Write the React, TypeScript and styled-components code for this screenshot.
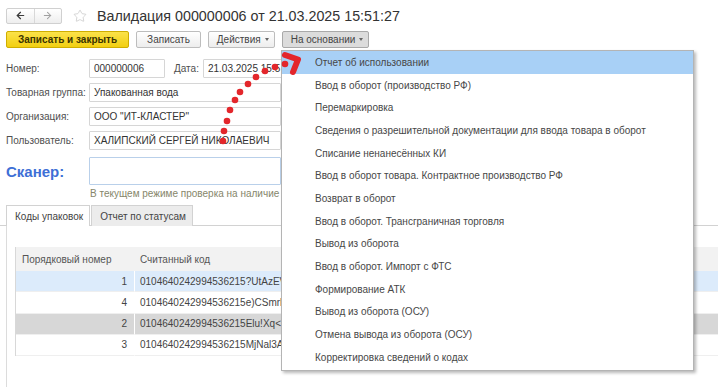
import React from 'react';
import styled, { createGlobalStyle, css } from 'styled-components';
import { ArrowLeft, ArrowRight, Star } from 'lucide-react';

const GlobalStyle = createGlobalStyle`
	html, body {
		margin: 0;
		padding: 0;
		background: #fff;
	}
	body {
		font-family: "Liberation Sans", Arial, sans-serif;
		font-size: 10px;
		color: #333;
	}
`;

const Page = styled.div`
	position: relative;
	width: 718px;
	height: 387px;
	overflow: hidden;
	background: #fff;
`;

const Header = styled.div`
	display: flex;
	align-items: center;
	height: 17px;
	padding: 7px 0 0 6px;
`;

const NavGroup = styled.div`
	display: flex;
	width: 56px;
	height: 16px;
	box-sizing: border-box;
	border: 1px solid #d0d0d0;
	border-radius: 2px;
	background: linear-gradient(#ffffff, #eeeeee);
`;

const NavButton = styled.div<{ $muted?: boolean }>`
	flex: 1;
	display: flex;
	align-items: center;
	justify-content: center;
	color: ${({ $muted }) => ($muted ? '#a0a0a0' : '#3a3a3a')};
	& + & {
		border-left: 1px solid #d8d8d8;
	}
`;

const StarBox = styled.div`
	display: flex;
	margin: 0 10px 0 11px;
	color: #c8c8c8;
`;

const Title = styled.div`
	font-size: 14.3px;
	color: #333;
	white-space: nowrap;
`;

const CommandBar = styled.div`
	display: flex;
	gap: 7px;
	padding: 7px 6px 0;
`;

const CmdButton = styled.div<{ $variant?: 'primary' | 'pressed'; $menu?: boolean }>`
	display: flex;
	align-items: center;
	gap: 4px;
	height: 17px;
	box-sizing: border-box;
	padding: ${({ $menu }) => ($menu ? '0 5px 0 8px' : '0 10px')};
	border: 1px solid #bdbdbd;
	border-radius: 2px;
	background: linear-gradient(#ffffff, #ededed);
	color: #444;
	white-space: nowrap;
	${({ $variant }) =>
		$variant === 'primary' &&
		css`
			padding: 0 11px;
			font-weight: bold;
			color: #3a3300;
			border-color: #cfae00;
			background: linear-gradient(#fbe24a, #f2cf12);
		`}
	${({ $variant }) =>
		$variant === 'pressed' &&
		css`
			border-color: #a9a9a9;
			background: #dcdcdc;
		`}
`;

const Caret = styled.span`
	width: 0;
	height: 0;
	border-left: 2px solid transparent;
	border-right: 2px solid transparent;
	border-top: 3px solid #666;
`;

const Form = styled.div`
	display: grid;
	grid-template-columns: 83px 1fr;
	grid-auto-rows: 19px;
	row-gap: 5px;
	align-items: center;
	padding: 11px 0 0 6px;
`;

const Label = styled.div`
	color: #4f4f4f;
	white-space: nowrap;
`;

const ScannerLabel = styled(Label)`
	font-size: 15px;
	font-weight: bold;
	color: #3e6fd6;
`;

const FieldRow = styled.div`
	display: flex;
	align-items: center;
	min-width: 0;
`;

const Input = styled.div<{ $width?: number; $tall?: boolean }>`
	display: flex;
	align-items: center;
	flex: none;
	width: ${({ $width }) => $width ?? 330}px;
	height: ${({ $tall }) => ($tall ? 28 : 19)}px;
	box-sizing: border-box;
	padding: 0 4px;
	border: 1px solid ${({ $tall }) => ($tall ? '#b9d0ea' : '#d6d6d6')};
	border-radius: 1px;
	background: #fff;
	color: #333;
	white-space: nowrap;
	overflow: hidden;
`;

const InlineLabel = styled(Label)`
	margin: 0 4px 0 9px;
`;

const ScannerRow = styled.div`
	display: grid;
	grid-template-columns: 83px 1fr;
	align-items: center;
	padding: 7px 0 0 6px;
`;

const Hint = styled.div`
	padding: 2px 0 0 90px;
	line-height: 13px;
	color: #86866a;
	white-space: nowrap;
`;

const TabBar = styled.div`
	display: flex;
	height: 21px;
	margin-top: 5px;
	padding-left: 6px;
	box-sizing: border-box;
	border-bottom: 1px solid #d2d2d2;
`;

const Tab = styled.div<{ $active?: boolean }>`
	display: flex;
	align-items: center;
	height: 21px;
	box-sizing: border-box;
	padding: 0 6px 0 8px;
	margin-right: 1px;
	border: 1px solid #d2d2d2;
	border-bottom: none;
	background: ${({ $active }) => ($active ? '#fff' : '#ececec')};
	color: #444;
	white-space: nowrap;
`;

const TabPanel = styled.div`
	margin-left: 6px;
	height: 170px;
	padding: 21px 0 0 8px;
	border-left: 1px solid #dcdcdc;
`;

const Table = styled.div`
	display: grid;
	grid-template-columns: 118px 1fr;
	width: 720px;
	border-left: 1px solid #d8d8d8;
`;

const HeadCell = styled.div`
	display: flex;
	align-items: center;
	height: 24px;
	padding-left: 6px;
	background: #f2f2f2;
	color: #555;
	white-space: nowrap;
`;

const rowColors: Record<string, string> = {
	selected: '#dcebfb',
	current: '#d7d7d7',
	plain: '#fff',
};

const Cell = styled.div<{ $tone: string; $num?: boolean }>`
	display: flex;
	align-items: center;
	justify-content: ${({ $num }) => ($num ? 'flex-end' : 'flex-start')};
	height: 21.25px;
	box-sizing: border-box;
	padding: ${({ $num }) => ($num ? '0 7px 0 0' : '0 0 0 5px')};
	background: ${({ $tone }) => rowColors[$tone]};
	border-bottom: 1px solid #efefef;
	border-left: ${({ $num }) => ($num ? 'none' : '1px solid #fff')};
	color: #444;
	white-space: nowrap;
	overflow: hidden;
`;

const Menu = styled.div`
	position: absolute;
	left: 281px;
	top: 50px;
	width: 413px;
	box-sizing: border-box;
	border: 1px solid #b4b4b4;
	background: #fff;
	box-shadow: 2px 2px 3px rgba(0, 0, 0, 0.28);
	padding-bottom: 1px;
`;

const MenuItem = styled.div<{ $active?: boolean }>`
	display: flex;
	align-items: center;
	height: 22.7px;
	padding-left: 33px;
	background: ${({ $active }) => ($active ? '#a8d0f6' : 'transparent')};
	color: #474747;
	white-space: nowrap;
`;

const Pointer = styled.svg`
	position: absolute;
	left: 0;
	top: 0;
	pointer-events: none;
`;

const menuItems = [
	'Отчет об использовании',
	'Ввод в оборот (производство РФ)',
	'Перемаркировка',
	'Сведения о разрешительной документации для ввода товара в оборот',
	'Списание ненанесённых КИ',
	'Ввод в оборот товара. Контрактное производство РФ',
	'Возврат в оборот',
	'Ввод в оборот. Трансграничная торговля',
	'Вывод из оборота',
	'Ввод в оборот. Импорт с ФТС',
	'Формирование АТК',
	'Вывод из оборота (ОСУ)',
	'Отмена вывода из оборота (ОСУ)',
	'Корректировка сведений о кодах',
];

// only the part of each code that shows left of the open menu
const codes = [
	{ n: 1, code: '0104640242994536215?UtAzEV', tone: 'selected' },
	{ n: 4, code: '0104640242994536215e)CSmrh', tone: 'plain' },
	{ n: 2, code: '0104640242994536215Elu!Xq<', tone: 'current' },
	{ n: 3, code: '0104640242994536215MjNal3A', tone: 'plain' },
];

const dots = [
	[223, 141],
	[224, 131],
	[227, 121],
	[230, 110],
	[235, 100],
	[240, 92],
	[248, 84],
	[256, 77],
	[265, 71],
	[275, 67],
	[285, 64],
];

export default function App() {
	return (
		<Page>
			<GlobalStyle />
			<Header>
				<NavGroup>
					<NavButton>
						<ArrowLeft size={11} strokeWidth={2.6} />
					</NavButton>
					<NavButton $muted>
						<ArrowRight size={11} strokeWidth={2.2} />
					</NavButton>
				</NavGroup>
				<StarBox>
					<Star size={14} strokeWidth={1.3} />
				</StarBox>
				<Title>Валидация 000000006 от 21.03.2025 15:51:27</Title>
			</Header>

			<CommandBar>
				<CmdButton $variant='primary'>Записать и закрыть</CmdButton>
				<CmdButton>Записать</CmdButton>
				<CmdButton $menu>
					Действия <Caret />
				</CmdButton>
				<CmdButton $menu $variant='pressed'>
					На основании <Caret />
				</CmdButton>
			</CommandBar>

			<Form>
				<Label>Номер:</Label>
				<FieldRow>
					<Input $width={76}>000000006</Input>
					<InlineLabel>Дата:</InlineLabel>
					<Input $width={80}>21.03.2025 15:5</Input>
				</FieldRow>
				<Label>Товарная группа:</Label>
				<Input $width={192}>Упакованная вода</Input>
				<Label>Организация:</Label>
				<Input $width={192}>ООО "ИТ-КЛАСТЕР"</Input>
				<Label>Пользователь:</Label>
				<Input $width={192}>ХАЛИПСКИЙ СЕРГЕЙ НИКОЛАЕВИЧ</Input>
			</Form>

			<ScannerRow>
				<ScannerLabel>Сканер:</ScannerLabel>
				<Input $tall $width={192} />
			</ScannerRow>
			<Hint>В текущем режиме проверка на наличие</Hint>

			<TabBar>
				<Tab $active>Коды упаковок</Tab>
				<Tab>Отчет по статусам</Tab>
			</TabBar>

			<TabPanel>
				<Table>
					<HeadCell>Порядковый номер</HeadCell>
					<HeadCell>Считанный код</HeadCell>
					{codes.map((row) => (
						<React.Fragment key={row.n}>
							<Cell $tone={row.tone} $num>
								{row.n}
							</Cell>
							<Cell $tone={row.tone}>{row.code}</Cell>
						</React.Fragment>
					))}
				</Table>
			</TabPanel>

			<Menu>
				{menuItems.map((item, i) => (
					<MenuItem key={item} $active={i === 0}>
						{item}
					</MenuItem>
				))}
			</Menu>

			<Pointer width={718} height={387} viewBox='0 0 718 387'>
				{dots.map(([x, y]) => (
					<circle key={`${x}-${y}`} cx={x} cy={y} r={3.3} fill='#e3262b' />
				))}
				<path
					d='M285 55 L298 59.5 L293 72'
					fill='none'
					stroke='#e3262b'
					strokeWidth={6}
					strokeLinecap='round'
					strokeLinejoin='round'
				/>
			</Pointer>
		</Page>
	);
}
